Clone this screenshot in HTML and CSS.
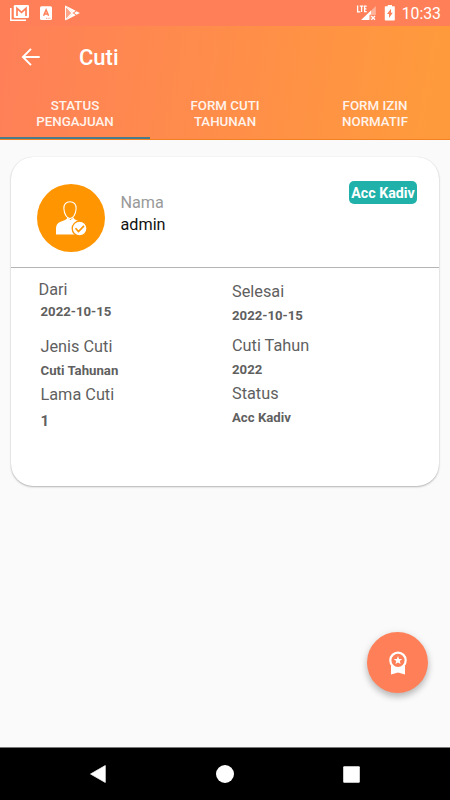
FILE: index.html
```html
<!DOCTYPE html>
<html lang="id">
<head>
<meta charset="utf-8">
<title>Cuti</title>
<link rel="stylesheet" href="styles.css">
</head>
<body>
<div class="screen">
  <div class="statusbar">
    <svg class="notices" width="72" height="26" viewBox="0 0 72 26">
      <path d="M.8 8v12.200H16" fill="none" stroke="#fff" stroke-width="1.500"/>
      <rect x="3.800" y="5" width="15.200" height="13" rx="1.300" fill="#fff"/>
      <path d="M7 16V8.300l4.500 4 4.500-4V16" fill="none" stroke="#ff8058" stroke-width="1.700"/>
      <rect x="30" y="6.300" width="12" height="13.700" rx="1.500" fill="#fff"/>
      <path d="M33.600 15.800l2.500-5.900 2.500 5.900M34.600 14h3" fill="none" stroke="#ff8058" stroke-width="1.500"/>
      <path d="M36 18.300h5" stroke="#ff8058" stroke-width=".8" stroke-dasharray="1 .7"/>
      <path d="M55.600 6.200v13.600L62 13z" fill="none" stroke="#fff" stroke-width="1.100" stroke-linejoin="round"/>
      <path d="M56 5.700l9.700 5-3 2.300zM56 20.300l9.700-5-3-2.300zM66.500 11.200l3.400 1.800-3.400 1.800-2.300-1.800z" fill="#fff"/>
      <path d="M56.500 8v10l4.500-5z" fill="#fff" opacity=".3"/>
    </svg>
    <div class="system">
      <svg width="40" height="26" viewBox="0 0 40 26">
        <path d="M6 19.700L19.800 6v13.700z" fill="#fff" opacity=".4"/>
        <path d="M5 20L15 10.500V14l-1.800 1.300V20z" fill="#fff"/>
        <path d="M1.600 5.500v6.300h2.700M3.800 6.100h3.600M5.600 6.100v6M10.700 6.100H8.600v5.500h2.100M8.600 8.800h1.800" fill="none" stroke="#fff" stroke-width="1.300"/>
        <path d="M14.500 15h5.500v5h-5.500z" fill="#ff8058"/>
        <path d="M15.300 16l3.700 3.700M19 16l-3.700 3.700" stroke="#fff" stroke-width="1.300"/>
        <path d="M29.600 6.300h2.200V5H36v1.300h2q.8 0 .8.800v12.700q0 .8-.8.800h-8.400q-.8 0-.8-.8V7.100q0-.8.800-.8z" fill="#fff"/>
        <path d="M35 8.800l-4 5.200h2v4l3.800-5.200H35z" fill="#ff8058"/>
      </svg>
      <span class="clock">10:33</span>
    </div>
  </div>
  <header class="header">
    <div class="toolbar">
      <svg class="back" width="20" height="20" viewBox="0 0 20 20"><path d="M18.700 10H2M10 1.800L1.900 10l8.100 8.200" fill="none" stroke="#fff" stroke-width="1.900"/></svg>
      <h1 class="title">Cuti</h1>
    </div>
    <nav class="tabs">
      <div class="tab active">STATUS<br>PENGAJUAN</div>
      <div class="tab">FORM CUTI<br>TAHUNAN</div>
      <div class="tab">FORM IZIN<br>NORMATIF</div>
    </nav>
  </header>
  <main class="content">
    <section class="card">
      <div class="person">
        <svg class="avatar" width="68" height="68" viewBox="0 0 68 68">
          <circle cx="34" cy="34" r="34" fill="#ff9500"/>
          <path d="M19 50.500v-6q0-5 4-6.500l5-2q2-.8 2.500-2.500l3 2.500 3-2.500q.5 1.700 2.500 2.500l5 2q4 1.500 4 6.500v6z" fill="#fff"/>
          <path d="M33 17.700c4 0 6.400 2.700 6.100 7-.3 5-2.800 9.900-6.100 9.900s-5.800-4.900-6.100-9.900c-.3-4.300 2.100-7 6.100-7z" fill="#ff9500" stroke="#fff" stroke-width="1.100"/>
          <circle cx="42.600" cy="44.600" r="7.400" fill="#fff" stroke="#ff9500" stroke-width="1.300"/>
          <circle cx="42.600" cy="44.600" r="5.700" fill="#fff"/>
          <path d="M38.500 44.300l3 3.300 5.500-5.700" fill="none" stroke="#ff9500" stroke-width="1.700"/>
        </svg>
        <div class="identity">
          <div class="caption">Nama</div>
          <div class="name">admin</div>
        </div>
        <span class="badge">Acc Kadiv</span>
      </div>
      <div class="details">
        <dl class="column left">
          <dt class="start">Dari</dt><dd>2022-10-15</dd>
          <dt class="kind">Jenis Cuti</dt><dd>Cuti Tahunan</dd>
          <dt>Lama Cuti</dt><dd class="count">1</dd>
        </dl>
        <dl class="column right">
          <dt class="end">Selesai</dt><dd>2022-10-15</dd>
          <dt class="year">Cuti Tahun</dt><dd>2022</dd>
          <dt>Status</dt><dd>Acc Kadiv</dd>
        </dl>
      </div>
    </section>
    <div class="fab">
      <svg width="18" height="24" viewBox="0 0 18 24">
        <path d="M2 15h14v8.500L9 21.400l-7 2.100z" fill="#fff"/>
        <circle cx="9" cy="9.300" r="7.700" fill="#ff8058" stroke="#fff" stroke-width="2.200"/>
        <path d="M9 5.100l1.100 2.900 3.100.1-2.400 2 .8 3L9 11.400l-2.600 1.700.8-3-2.400-2 3.100-.1z" fill="#fff"/>
      </svg>
    </div>
  </main>
  <footer class="navbar">
    <svg width="16" height="18" viewBox="0 0 16 18"><path d="M15.300.5v17L.5 9z" fill="#fff" stroke="#fff" stroke-linejoin="round" stroke-width=".7"/></svg>
    <svg width="18" height="18" viewBox="0 0 18 18"><circle cx="9" cy="9" r="9" fill="#fff"/></svg>
    <svg width="17" height="17" viewBox="0 0 17 17"><rect x=".2" y=".2" width="16.600" height="16.600" rx="1" fill="#fff"/></svg>
  </footer>
</div>
</body>
</html>
```

FILE: styles.css
```css
* { box-sizing: border-box; }
body { margin: 0; font-family: Roboto, "Liberation Sans", sans-serif; }
svg { display: block; flex: none; }
.screen { width: 450px; height: 800px; display: flex; flex-direction: column; background: #fafafa; overflow: hidden; }
.statusbar { height: 26px; flex: none; display: flex; justify-content: space-between; padding: 0 9px 0 10px; background: #ff8058; color: #fff; }
.system { display: flex; gap: 6px; }
.clock { font-size: 15.800px; line-height: 28px; font-weight: 400; }
.header { height: 114px; flex: none; display: flex; flex-direction: column; background: linear-gradient(100deg, #ff8058 2%, #ff9a3c 95%); color: #fff; border-bottom: 1px solid #f38120; }
.toolbar { height: 62px; display: flex; align-items: center; padding-left: 21px; gap: 38px; }
.title { margin: 2px 0 0; font-size: 22px; line-height: 26px; font-weight: 500; }
.tabs { height: 52px; display: flex; flex: none; }
.tab { flex: 1; padding-top: 11px; text-align: center; font-size: 13.300px; line-height: 16px; font-weight: 500; color: #fff3ec; }
.tab.active { border-bottom: 2px solid #467c8c; }
.content { flex: 1; display: flex; flex-direction: column; justify-content: space-between; padding: 17px 11px 54px; }
.card { height: 329px; background: #fff; border-radius: 22px; box-shadow: 0 1px 2px rgba(0,0,0,.28), 0 0 1px rgba(0,0,0,.12); }
.person { height: 111px; display: flex; padding: 27px 22px 0 26px; border-bottom: 1px solid #b4b4b4; }
.identity { margin: 8px auto 0 15.500px; font-size: 16.200px; line-height: 22px; }
.caption { color: #999; }
.name { color: #111; }
.badge { height: 23px; width: 68px; margin-top: -3px; border-radius: 5px; background: #20b2aa; color: #fff; font-size: 14.200px; line-height: 24px; font-weight: 700; text-align: center; white-space: nowrap; }
.details { display: flex; }
.column { margin: 1px 0 0; color: #5f5f5f; }
.left { width: 221px; padding-left: 29.500px; }
.column dt { font-size: 16.300px; line-height: 20px; margin-top: 4px; }
.column dd { font-size: 13.200px; line-height: 20px; font-weight: 700; margin: 4px 0 0; }
.column .start { margin: 10.500px 0 0 -2px; }
.column .start + dd { margin-top: 2px; }
.column .kind { margin-top: 15px; }
.column .count { margin-top: 6px; font-size: 15px; }
.column .end { margin-top: 12.500px; }
.column .year { margin-top: 10px; }
.fab { align-self: flex-end; width: 61px; height: 61px; border-radius: 50%; background: #ff8058; display: flex; align-items: center; justify-content: center; margin-right: 11px; box-shadow: 0 4px 6px rgba(0,0,0,.2), 0 2px 10px rgba(0,0,0,.1); }
.navbar { height: 53px; flex: none; display: flex; align-items: center; justify-content: space-between; padding: 0 90px; background: #000; border-top: 1px solid #777; }
```
